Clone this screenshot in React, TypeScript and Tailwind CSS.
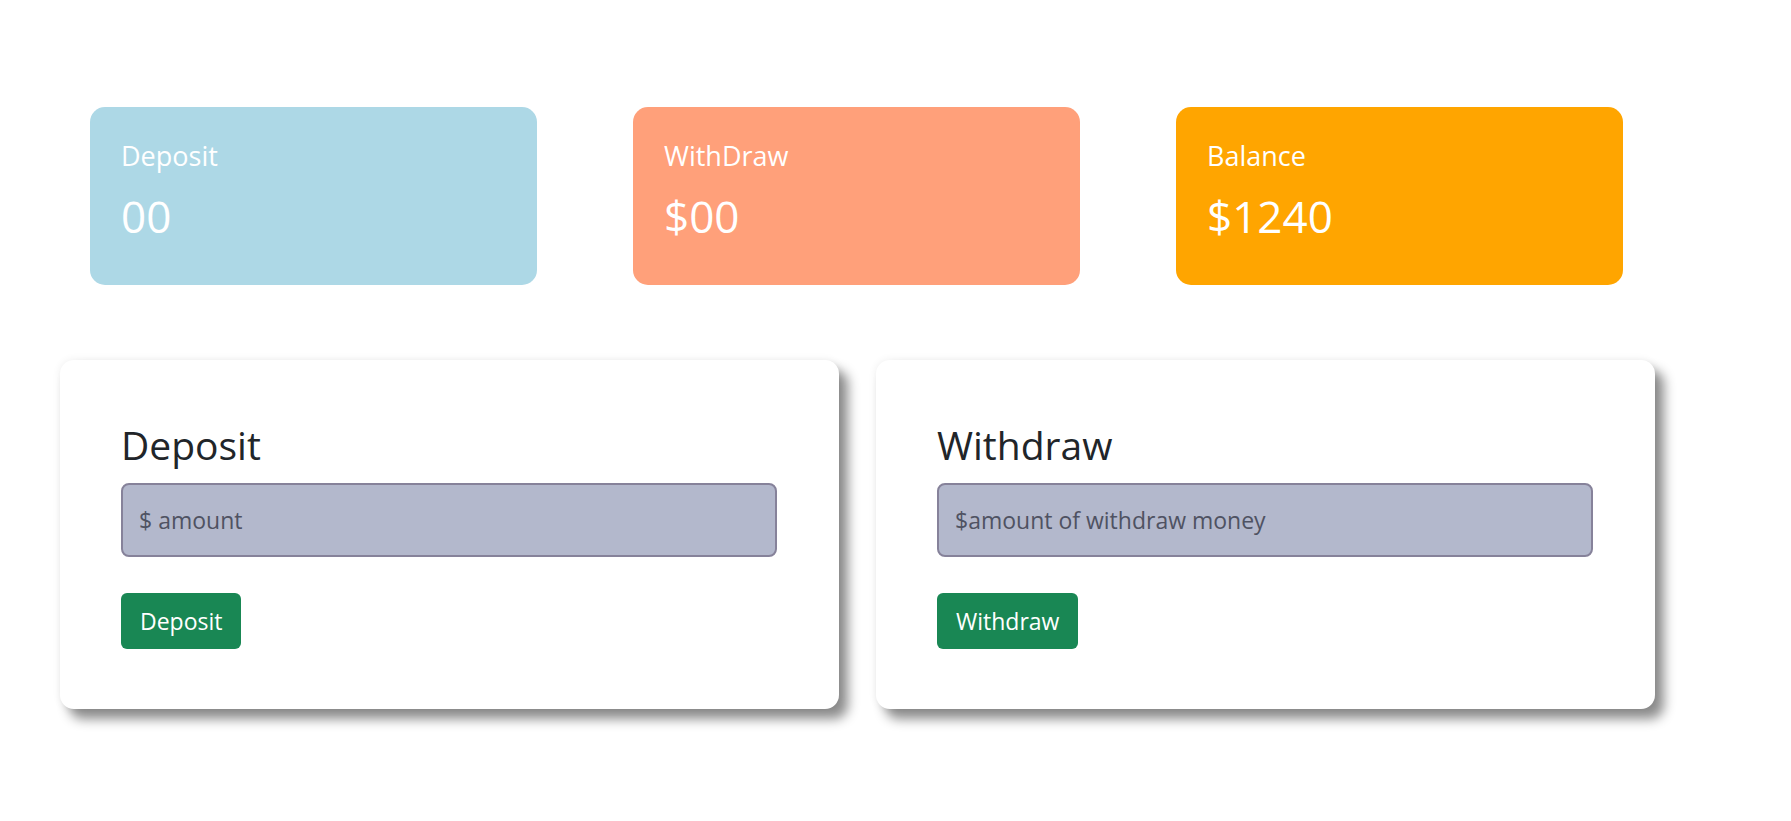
import React from "react"

const stats = [
  { label: "Deposit", value: "00", bg: "bg-[#add8e6]" },
  { label: "WithDraw", value: "$00", bg: "bg-[#ffa07a]" },
  { label: "Balance", value: "$1240", bg: "bg-[#ffa500]" },
]

function StatCard({ label, value, bg }: { label: string; value: string; bg: string }) {
  return (
    <div className={`${bg} w-[447px] h-[178px] rounded-[15px] px-[31px] pt-[32px] text-white`}>
      <h3 className="text-[27px] leading-[34px] font-normal">{label}</h3>
      <h1 className="mt-[16px] text-[44px] leading-[54px] font-normal">{value}</h1>
    </div>
  )
}

function ActionCard({ title, placeholder, button }: { title: string; placeholder: string; button: string }) {
  return (
    <div className="w-[779px] rounded-[14px] bg-white px-[61px] pt-[61px] pb-[60px] shadow-[9px_10px_12px_rgba(0,0,0,0.45),0_0_8px_rgba(0,0,0,0.07)]">
      <h1 className="text-[39px] leading-[48px] font-normal text-[#212529]">{title}</h1>
      <input
        type="text"
        placeholder={placeholder}
        className="mt-[14px] block w-[656px] h-[74px] rounded-[8px] border-[2.5px] border-[#86829a] bg-[#b3b8cc] px-[16px] text-[23px] text-[#212529] placeholder:text-[#4f5262] outline-none"
      />
      <button className="mt-[36px] h-[56px] rounded-[6px] bg-[#198754] px-[19px] text-[23px] text-white">
        {button}
      </button>
    </div>
  )
}

export default function App() {
  return (
    <div className="min-h-screen bg-white font-['Open_Sans',sans-serif]">
      <div className="flex gap-[96px] pl-[90px] pt-[107px]">
        {stats.map((s) => (
          <StatCard key={s.label} {...s} />
        ))}
      </div>
      <div className="flex gap-[37px] pl-[60px] mt-[75px]">
        <ActionCard title="Deposit" placeholder="$ amount" button="Deposit" />
        <ActionCard title="Withdraw" placeholder="$amount of withdraw money" button="Withdraw" />
      </div>
    </div>
  )
}
